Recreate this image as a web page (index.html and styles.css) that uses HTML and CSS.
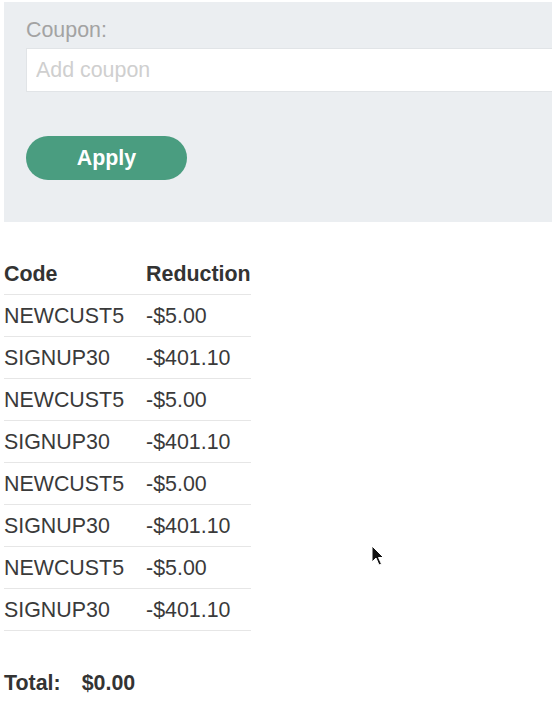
FILE: index.html
```html
<!DOCTYPE html>
<html lang="en">
<head>
<meta charset="utf-8">
<title>Coupon</title>
<link rel="stylesheet" href="styles.css">
</head>
<body>
<div class="page">
  <form class="coupon-panel">
    <label class="coupon-label" for="coupon">Coupon:</label>
    <input class="coupon-input" id="coupon" type="text" placeholder="Add coupon">
    <button class="apply-btn" type="button">Apply</button>
  </form>

  <table class="codes">
    <thead>
      <tr><th>Code</th><th>Reduction</th></tr>
    </thead>
    <tbody>
      <tr><td>NEWCUST5</td><td>-$5.00</td></tr>
      <tr><td>SIGNUP30</td><td>-$401.10</td></tr>
      <tr><td>NEWCUST5</td><td>-$5.00</td></tr>
      <tr><td>SIGNUP30</td><td>-$401.10</td></tr>
      <tr><td>NEWCUST5</td><td>-$5.00</td></tr>
      <tr><td>SIGNUP30</td><td>-$401.10</td></tr>
      <tr><td>NEWCUST5</td><td>-$5.00</td></tr>
      <tr><td>SIGNUP30</td><td>-$401.10</td></tr>
    </tbody>
  </table>

  <div class="total">
    <span class="total-label">Total:</span>
    <span class="total-value">$0.00</span>
  </div>

  <svg class="cursor" width="14" height="22" viewBox="0 0 14 22" aria-hidden="true">
    <path d="M1 1 L1 17 L5 13 L8 20 L10.5 19 L7.5 12.5 L12.5 12.5 Z" fill="#111" stroke="#fff" stroke-width="1" stroke-linejoin="round"/>
  </svg>
</div>
</body>
</html>
```

FILE: styles.css
```css
html, body {
  margin: 0;
  padding: 0;
  background: #fff;
}

body {
  font-family: "Liberation Sans", Arial, sans-serif;
  font-size: 21.4px;
  color: #3a3a3a;
}

.page {
  position: relative;
  width: 552px;
  height: 712px;
  overflow: hidden;
}

.coupon-panel {
  display: flex;
  flex-direction: column;
  align-items: flex-start;
  margin: 2px 0 0 4px;
  padding: 16px 0 42px 22px;
  background: #ebeef1;
}

.coupon-label {
  font-size: 21.4px;
  line-height: 24px;
  color: #a3a3a3;
  margin-bottom: 6px;
}

.coupon-input {
  box-sizing: border-box;
  width: 100%;
  height: 44px;
  margin: 0 0 44px 0;
  padding: 0 9px;
  border: 1px solid #e1e4e7;
  border-right: none;
  border-radius: 0;
  background: #fff;
  font-family: inherit;
  font-size: 21.4px;
  color: #333;
  outline: none;
}

.coupon-input::placeholder {
  color: #cfcfcf;
}

.apply-btn {
  width: 161px;
  height: 44px;
  border: none;
  border-radius: 22px;
  background: #4a9d80;
  color: #fff;
  font-family: inherit;
  font-size: 21.4px;
  font-weight: bold;
  padding: 0;
  cursor: pointer;
}

.codes {
  margin: 31px 0 0 4px;
  border-collapse: collapse;
}

.codes th,
.codes td {
  height: 41px;
  padding: 0 22px 0 0;
  text-align: left;
  line-height: 24px;
  border-bottom: 1px solid #e6e6e6;
  white-space: nowrap;
}

.codes th:last-child,
.codes td:last-child {
  padding-right: 0;
}

.codes th {
  font-weight: bold;
  color: #333;
}

.total {
  display: flex;
  gap: 21px;
  margin: 40px 0 0 4px;
  line-height: 24px;
  font-weight: bold;
  color: #333;
}

.cursor {
  position: absolute;
  left: 371px;
  top: 545px;
}
```
